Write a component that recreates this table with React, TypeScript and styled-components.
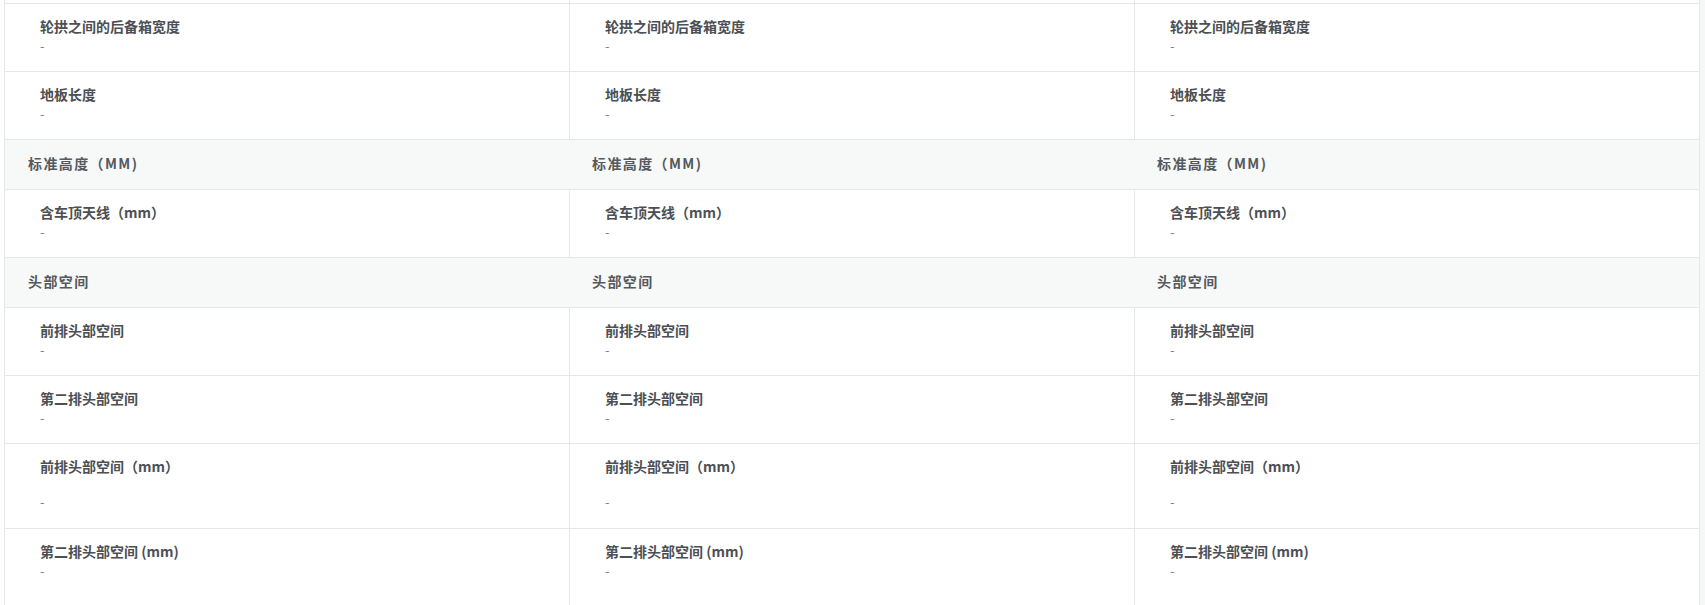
import React from "react";
import styled, { createGlobalStyle } from "styled-components";

const GlobalStyle = createGlobalStyle`
  html, body {
    margin: 0;
    padding: 0;
    background: #f6f7f7;
  }
  body {
    font-family: "Noto Sans CJK SC", "Noto Sans", "Liberation Sans", sans-serif;
    overflow: hidden;
  }
`;

const Page = styled.div`
  width: 1705px;
  height: 605px;
  overflow: hidden;
  box-sizing: border-box;
  padding-left: 4px;
  background: #ffffff;
  display: flex;
  align-items: flex-start;
`;

const Side = styled.div`
  width: 5px;
  height: 605px;
  flex: none;
  background: #f6f7f7;
`;

const Table = styled.div`
  flex: 1;
  border-left: 1px solid #e6e8e8;
  border-right: 1px solid #e6e8e8;
  background: #ffffff;
  display: flex;
  flex-direction: column;
  & > * {
    flex: none;
  }
`;

const Row = styled.div`
  display: grid;
  grid-template-columns: 564px 565px 1fr;
  border-bottom: 1px solid #e6e8e8;
`;

const RowTail = styled(Row)`
  height: 3px;
`;

const TailCell = styled.div`
  & + & {
    border-left: 1px solid #e6e8e8;
  }
`;

const SectionRow = styled.div`
  display: grid;
  grid-template-columns: 564px 565px 1fr;
  height: 49px;
  background: #f7f8f8;
  border-bottom: 1px solid #e6e8e8;
`;

const SectionTitle = styled.div`
  padding-left: 23px;
  line-height: 46px;
  font-size: 14px;
  font-weight: 700;
  color: #555a5e;
  letter-spacing: 1.4px;
  white-space: nowrap;
`;

const Cell = styled.div<{ $tall?: boolean; $last?: boolean }>`
  box-sizing: border-box;
  padding: 12px 0 ${(p) => (p.$last ? "40px" : "15px")} 35px;
  min-height: ${(p) => (p.$tall ? "84px" : "67px")};
  & + & {
    border-left: 1px solid #e6e8e8;
  }
`;

const Label = styled.div<{ $gap?: boolean }>`
  font-size: 14px;
  line-height: 20px;
  font-weight: 700;
  color: #4c5054;
  white-space: nowrap;
  margin-bottom: ${(p) => (p.$gap ? "16px" : "0")};
`;

const Value = styled.div`
  font-size: 13px;
  line-height: 20px;
  color: #7d8185;
`;

type Item =
  | { kind: "section"; title: string }
  | { kind: "row"; label: string; tall?: boolean; last?: boolean };

const items: Item[] = [
  { kind: "row", label: "轮拱之间的后备箱宽度" },
  { kind: "row", label: "地板长度" },
  { kind: "section", title: "标准高度（MM)" },
  { kind: "row", label: "含车顶天线（mm）" },
  { kind: "section", title: "头部空间" },
  { kind: "row", label: "前排头部空间" },
  { kind: "row", label: "第二排头部空间" },
  { kind: "row", label: "前排头部空间（mm）", tall: true },
  { kind: "row", label: "第二排头部空间 (mm)", last: true },
];

const columns = [0, 1, 2];

export default function App() {
  return (
    <>
      <GlobalStyle />
      <Page>
        <Table>
          <RowTail>
            {columns.map((c) => (
              <TailCell key={c} />
            ))}
          </RowTail>
          {items.map((item, i) =>
            item.kind === "section" ? (
              <SectionRow key={i}>
                {columns.map((c) => (
                  <SectionTitle key={c}>{item.title}</SectionTitle>
                ))}
              </SectionRow>
            ) : (
              <Row key={i}>
                {columns.map((c) => (
                  <Cell key={c} $tall={item.tall} $last={item.last}>
                    <Label $gap={item.tall}>{item.label}</Label>
                    <Value>-</Value>
                  </Cell>
                ))}
              </Row>
            )
          )}
        </Table>
        <Side />
      </Page>
    </>
  );
}
